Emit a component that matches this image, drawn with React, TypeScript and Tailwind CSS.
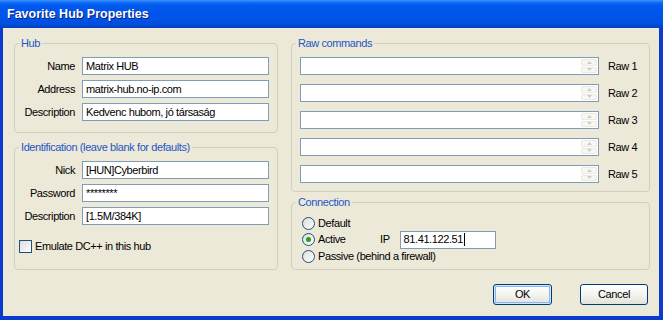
import React from 'react';

function TextBox({ value, className = '', children }: { value?: string; className?: string; children?: React.ReactNode }) {
  return (
    <div className={`flex h-[18px] items-center border border-[#7F9DB9] bg-white pl-[3px] leading-none ${className}`}>
      {value}
      {children}
    </div>
  );
}

function Group({ title, className = '', children }: { title: string; className?: string; children: React.ReactNode }) {
  return (
    <fieldset className={`rounded-[4px] border border-[#D0D0BF] ${className}`}>
      <legend className="ml-[4px] px-[2px] leading-[13px] text-[#2456C6]">{title}</legend>
      {children}
    </fieldset>
  );
}

function Spinner() {
  return (
    <div className="flex w-[16px] flex-col gap-px">
      <div className="flex flex-1 items-center justify-center rounded-[2px] border border-[#EAE9E2] bg-[#F7F7F3]">
        <svg width="5" height="3" viewBox="0 0 5 3">
          <path d="M0 3 L2.5 0 L5 3 Z" fill="#CFCEC6" />
        </svg>
      </div>
      <div className="flex flex-1 items-center justify-center rounded-[2px] border border-[#EAE9E2] bg-[#F7F7F3]">
        <svg width="5" height="3" viewBox="0 0 5 3">
          <path d="M0 0 L2.5 3 L5 0 Z" fill="#CFCEC6" />
        </svg>
      </div>
    </div>
  );
}

function Radio({ checked = false }: { checked?: boolean }) {
  return (
    <div className="flex h-[13px] w-[13px] items-center justify-center rounded-full border border-[#1C5180] bg-linear-to-br from-[#DCDCD7] to-white">
      {checked && <div className="h-[5px] w-[5px] rounded-full bg-[#21A121]" />}
    </div>
  );
}

const hubRows = [
  ['Name', 'Matrix HUB'],
  ['Address', 'matrix-hub.no-ip.com'],
  ['Description', 'Kedvenc hubom, jó társaság'],
];

const idRows = [
  ['Nick', '[HUN]Cyberbird'],
  ['Password', '********'],
  ['Description', '[1.5M/384K]'],
];

export default function App() {
  return (
    <div className="flex h-[320px] w-[663px] flex-col font-['Liberation_Sans',Arial,sans-serif] text-[11px] tracking-[-0.4px] text-black">
      {/* title bar */}
      <div className="flex h-[28px] shrink-0 items-center bg-[linear-gradient(180deg,#3D95FF_0px,#0A66F5_3px,#0058EE_6px,#0055E8_18px,#004FDD_24px,#0044C8_27px,#0A3FC0_28px)] pl-[7px]">
        <span className="text-[12.5px] font-bold tracking-normal text-white [text-shadow:1px_1px_#0A1883]">
          Favorite Hub Properties
        </span>
      </div>

      <div className="flex flex-1 flex-col border-b-4 border-l-[3px] border-r-4 border-[#0B3ACF] bg-[#ECE9D8] pl-[11px] pr-[9px] pt-[9px]">
        <div className="flex h-[233px] gap-[13px]">
          {/* left column */}
          <div className="flex w-[264px] flex-col">
            <Group title="Hub">
              <div className="flex flex-col gap-[5px] pb-[11px] pr-[8px] pt-[7px]">
                {hubRows.map(([label, value]) => (
                  <div key={label} className="flex items-center">
                    <span className="w-[60px] text-right">{label}</span>
                    <TextBox value={value} className="ml-[7px] flex-1" />
                  </div>
                ))}
              </div>
            </Group>

            <Group title="Identification (leave blank for defaults)" className="mt-[8px] flex-1">
              <div className="flex flex-col gap-[5px] pr-[8px] pt-[7px]">
                {idRows.map(([label, value]) => (
                  <div key={label} className="flex items-center">
                    <span className="w-[60px] text-right">{label}</span>
                    <TextBox value={value} className="ml-[7px] flex-1" />
                  </div>
                ))}
              </div>
              <div className="mt-[13px] flex items-center pl-[4px]">
                <div className="h-[13px] w-[13px] border border-[#1C5180] bg-linear-to-br from-[#DCDCD7] to-white" />
                <span className="ml-[3px]">Emulate DC++ in this hub</span>
              </div>
            </Group>
          </div>

          {/* right column */}
          <div className="flex flex-1 flex-col">
            <Group title="Raw commands">
              <div className="flex flex-col gap-[9px] pb-[8px] pl-[8px] pt-[7px]">
                {[1, 2, 3, 4, 5].map((n) => (
                  <div key={n} className="flex items-center">
                    <div className="flex h-[18px] w-[299px] justify-end border border-[#7F9DB9] bg-white p-px">
                      <Spinner />
                    </div>
                    <span className="ml-[9px]">Raw {n}</span>
                  </div>
                ))}
              </div>
            </Group>

            <Group title="Connection" className="mt-[4px] flex-1">
              <div className="flex flex-col pl-[10px] pt-[6px]">
                <div className="flex h-[16px] items-center">
                  <Radio />
                  <span className="ml-[3px]">Default</span>
                </div>
                <div className="flex h-[17px] items-center">
                  <div className="flex w-[78px] items-center">
                    <Radio checked />
                    <span className="ml-[3px]">Active</span>
                  </div>
                  <span>IP</span>
                  <TextBox className="ml-[10px] h-[17px] w-[96px]">
                    81.41.122.51
                    <span className="ml-px h-[13px] w-px bg-black" />
                  </TextBox>
                </div>
                <div className="flex h-[17px] items-center">
                  <Radio />
                  <span className="ml-[3px]">Passive (behind a firewall)</span>
                </div>
              </div>
            </Group>
          </div>
        </div>

        {/* buttons */}
        <div className="mt-[14px] flex justify-end gap-[28px] pr-[2px]">
          <button className="flex h-[21px] w-[59px] items-center justify-center rounded-[3px] border border-[#003C74] bg-linear-to-b from-white via-[#F4F4F0] to-[#E3E3DB] shadow-[inset_0_0_0_1px_#CEE7FF,inset_0_0_0_2px_#8CB4F2]">
            OK
          </button>
          <button className="flex h-[21px] w-[68px] items-center justify-center rounded-[3px] border border-[#003C74] bg-linear-to-b from-white via-[#F4F4F0] to-[#E3E3DB]">
            Cancel
          </button>
        </div>
      </div>
    </div>
  );
}
